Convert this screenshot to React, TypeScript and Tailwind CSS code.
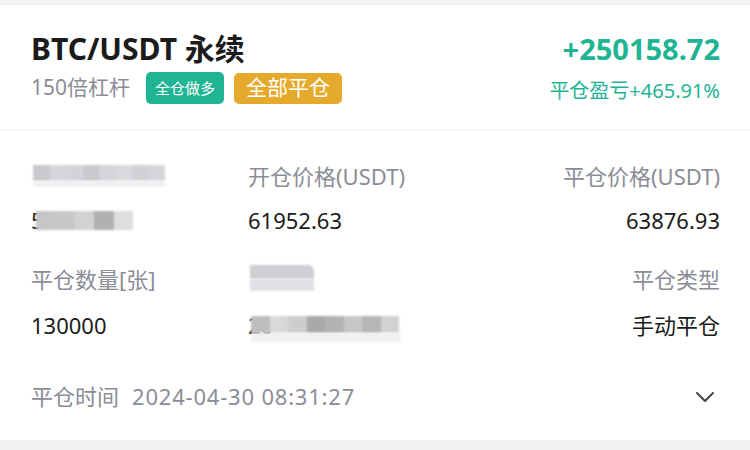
import React from "react";

const GRAY = "text-[#8a8d96]";
const DARK = "text-[#1b1b1b]";

// pixelated blur to stand in for the masked fields
const Blur = ({ shades, cell, h, className = "" }: { shades: string[]; cell: number; h: number; className?: string }) => (
  <div className={`flex blur-[1px] ${className}`}>
    {shades.map((s, i) => (
      <div key={i} style={{ width: cell, height: h, background: s }} />
    ))}
  </div>
);

const App = () => {
  return (
    <div className="w-[750px] h-[450px] overflow-hidden bg-[#f2f2f2] flex flex-col" style={{ fontFamily: '"Noto Sans", "Noto Sans CJK SC", sans-serif' }}>
      <div className="h-[5px] bg-[#f4f4f4] border-b border-[#ececec]" />

      {/* Header */}
      <div className="h-[126px] bg-white border-b border-[#f1f1f1] flex items-start justify-between pl-[31px] pr-[30px] pt-[25px]">
        <div className="flex flex-col">
          <div className={`text-[30px] leading-[38px] font-bold ${DARK}`}>BTC/USDT 永续</div>
          <div className="flex items-center mt-[4px]">
            <span className={`text-[21px] ${GRAY} mr-[16px]`}>150倍杠杆</span>
            <span className="h-[32px] px-[9px] rounded-[5px] bg-[#1fb493] text-white text-[15px] flex items-center">全仓做多</span>
            <span className="h-[31px] ml-[10px] px-[12px] rounded-[5px] bg-[#e5a92b] text-white text-[21px] flex items-center">全部平仓</span>
          </div>
        </div>
        <div className="flex flex-col items-end">
          <div className="text-[29px] leading-[38px] font-bold text-[#1fb493]">+250158.72</div>
          <div className="text-[20px] text-[#1fb493] mt-[8px]">平仓盈亏+465.91%</div>
        </div>
      </div>

      {/* Details */}
      <div className="h-[309px] bg-white pl-[31px] pr-[30px] pt-[29px] flex flex-col">
        <div className="grid grid-cols-[217px_1fr_1fr]">
          <div className="h-[32px] flex items-center pl-[2px]">
            <div className="flex flex-col">
              <Blur cell={16.5} h={16} shades={["#c9c9cd", "#d6d6da", "#d4d4d8", "#c9c9cd", "#d5d5d9", "#dadade", "#d1d1d5", "#d6d6da"]} />
              <div className="h-[6px] w-[132px] bg-[#f0f0f2] blur-[1px]" />
            </div>
          </div>
          <div className={`h-[32px] flex items-center text-[22px] ${GRAY}`}>开仓价格(USDT)</div>
          <div className={`h-[32px] flex items-center justify-end text-[22px] ${GRAY}`}>平仓价格(USDT)</div>

          <div className="h-[44px] mt-[6px] flex items-center">
            <span className={`text-[22px] ${DARK}`}>5</span>
            <Blur className="-ml-[8px]" cell={19.5} h={19} shades={["#c6c6c6", "#c8c8c8", "#d2d2d2", "#b0b0b0", "#dedede"]} />
          </div>
          <div className={`h-[44px] mt-[6px] flex items-center text-[22px] ${DARK}`}>61952.63</div>
          <div className={`h-[44px] mt-[6px] flex items-center justify-end text-[22px] ${DARK}`}>63876.93</div>

          <div className="h-[40px] mt-[17px] flex items-center">
            <span className={`text-[22px] ${GRAY}`}>平仓数量[张]</span>
          </div>
          <div className="h-[40px] mt-[17px] flex items-center pl-[2px]">
            <div className="flex flex-col -mt-[2px]">
              <div className="w-[64px] h-[14px] bg-[#cfcfd3] blur-[1px] rounded-tr-[6px]" />
              <div className="w-[64px] h-[12px] bg-[#e1e1e5] blur-[1px]" />
            </div>
          </div>
          <div className={`h-[40px] mt-[17px] flex items-center justify-end text-[22px] ${GRAY}`}>平仓类型</div>

          <div className="h-[44px] mt-[4px] flex items-center">
            <span className={`text-[22px] ${DARK}`}>130000</span>
          </div>
          <div className="h-[44px] mt-[4px] flex items-center">
            <span className={`text-[22px] ${DARK}`}>20</span>
            <div className="flex flex-col -ml-[22px] mt-[8px]">
              <Blur cell={18.5} h={17} shades={["#bdbdbd", "#d9d9d9", "#cdcdcd", "#a9a9a9", "#b2b2b2", "#c7c7c7", "#b6b6b6", "#d2d2d2"]} />
              <div className="h-[9px] w-[150px] bg-[#f0f0f0] blur-[1px]" />
            </div>
          </div>
          <div className={`h-[44px] mt-[4px] flex items-center justify-end text-[22px] ${DARK}`}>手动平仓</div>
        </div>

        <div className="flex items-center justify-between mt-[33px]">
          <span className={`text-[22px] ${GRAY}`}>
            平仓时间<span className="ml-[13px] tracking-[0.8px]">2024-04-30 08:31:27</span>
          </span>
          <svg width="22" height="14" viewBox="0 0 22 14" className="mr-[4px]">
            <polyline points="3,3 11,11 19,3" fill="none" stroke="#444" strokeWidth="2" strokeLinecap="round" strokeLinejoin="round" />
          </svg>
        </div>
      </div>
    </div>
  );
};

export default App;
